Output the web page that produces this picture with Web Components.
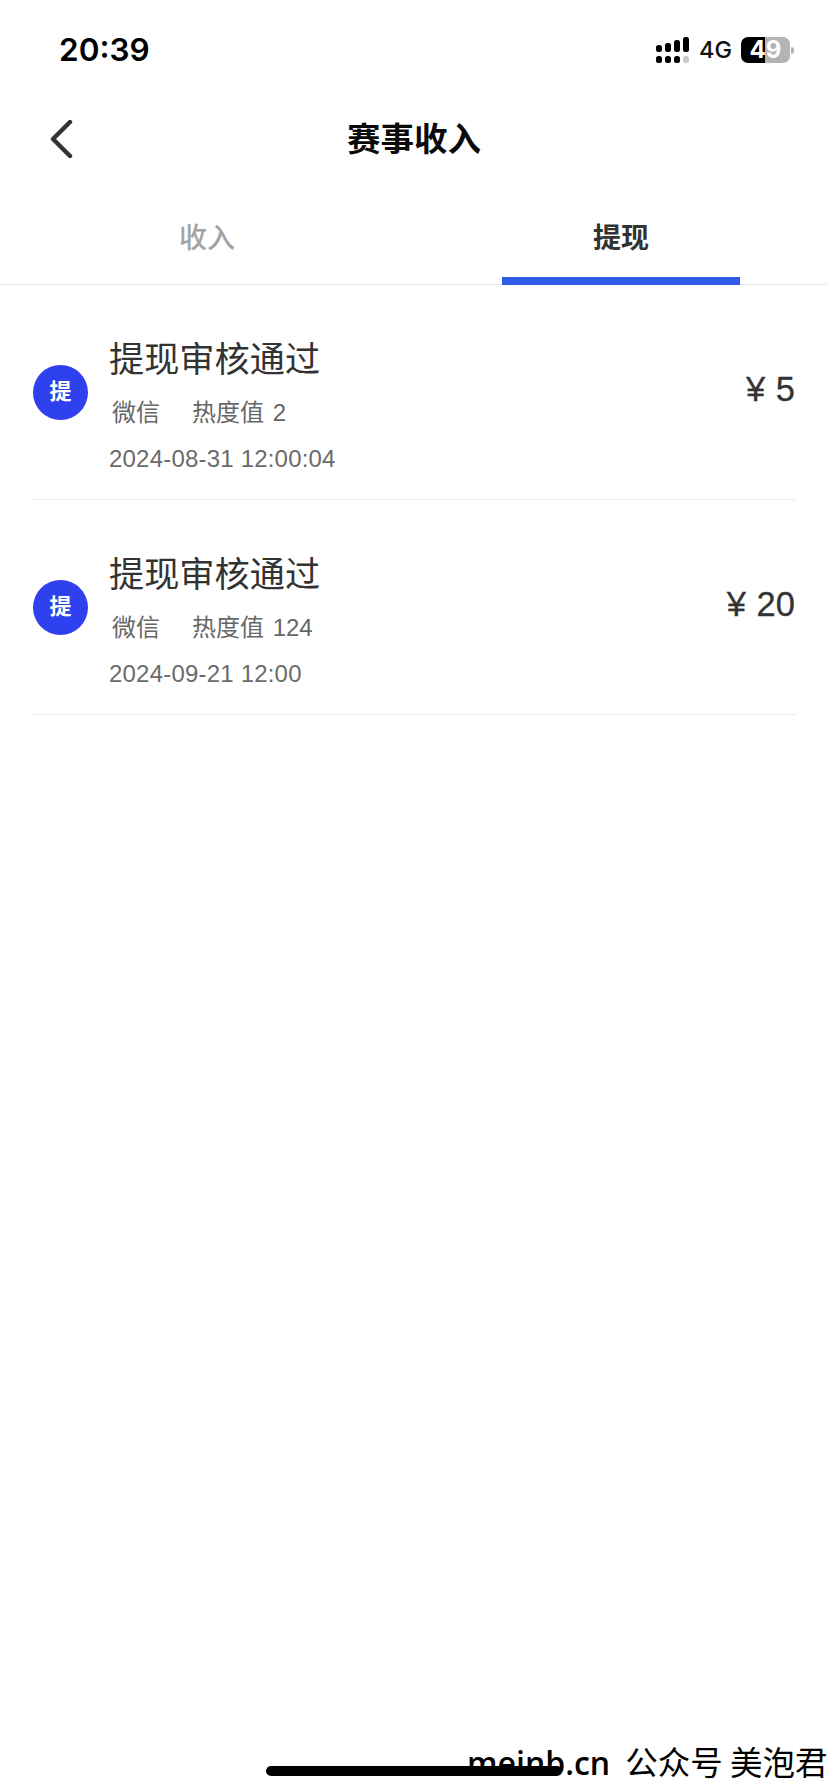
<!DOCTYPE html>
<html lang="zh">
<head>
<meta charset="utf-8">
<title>赛事收入</title>
<style>
  html, body { margin: 0; padding: 0; background: #fff; }
  body {
    position: relative;
    width: 828px;
    height: 1792px;
    overflow: hidden;
    font-family: "Inter", "Noto Sans CJK SC", sans-serif;
  }
</style>
</head>
<body>
<status-bar time="20:39" network="4G" battery="49"></status-bar>
<nav-header>赛事收入</nav-header>
<tab-bar>
  <tab-item>收入</tab-item>
  <tab-item active>提现</tab-item>
</tab-bar>
<record-list>
  <record-row amount="¥ 5">
    <span slot="title">提现审核通过</span>
    <span slot="channel">微信</span>
    <span slot="heat">热度值 2</span>
    <span slot="date">2024-08-31 12:00:04</span>
  </record-row>
  <record-row amount="¥ 20">
    <span slot="title">提现审核通过</span>
    <span slot="channel">微信</span>
    <span slot="heat">热度值 124</span>
    <span slot="date">2024-09-21 12:00</span>
  </record-row>
</record-list>
<water-mark></water-mark>
<home-bar></home-bar>

<script>
const statusTpl = document.createElement('template');
statusTpl.innerHTML = `
  <style>
    :host { display: flex; justify-content: space-between; align-items: flex-start; height: 98px; box-sizing: border-box; padding: 30px 34px 0 59px; }
    .time { font: 600 31.5px/40px "Inter", sans-serif; color: #000; }
    .right { display: flex; align-items: center; height: 30px; margin-top: 5px; }
    svg { display: block; }
    .net { font: 500 23.5px/30px "Inter", sans-serif; color: #111; margin-left: 10px; width: 42px; }
    .batt { width: 49px; height: 26px; border-radius: 7px; background: linear-gradient(90deg, #000 49%, #b4b4b4 49%); text-align: center; font: 700 24px/26px "Inter", sans-serif; color: #fff; }
    .nub { width: 3px; height: 7px; margin-left: 1px; background: #b4b4b4; border-radius: 0 3px 3px 0; }
  </style>
  <div class="time"></div>
  <div class="right">
    <svg width="33" height="26" viewBox="0 0 33 26">
      <rect x="0" y="8" width="6" height="7" rx="2.5"/>
      <rect x="9" y="6" width="6" height="9" rx="2.5"/>
      <rect x="18" y="3" width="6" height="12" rx="2.5"/>
      <rect x="27" y="0" width="6" height="15" rx="2.5"/>
      <rect x="0" y="19" width="6" height="7" rx="2.5"/>
      <rect x="9" y="19" width="6" height="7" rx="2.5"/>
      <rect x="18" y="19" width="6" height="7" rx="2.5"/>
      <rect x="27" y="19" width="6" height="7" rx="2.5" fill="#c8c8c8"/>
    </svg>
    <div class="net"></div>
    <div class="batt"></div>
    <div class="nub"></div>
  </div>`;

class StatusBar extends HTMLElement {
  constructor() {
    super();
    this.attachShadow({ mode: 'open' }).appendChild(statusTpl.content.cloneNode(true));
  }
  connectedCallback() {
    this.shadowRoot.querySelector('.time').textContent = this.getAttribute('time');
    this.shadowRoot.querySelector('.net').textContent = this.getAttribute('network');
    this.shadowRoot.querySelector('.batt').textContent = this.getAttribute('battery');
  }
}

const navTpl = document.createElement('template');
navTpl.innerHTML = `
  <style>
    :host { display: flex; align-items: center; justify-content: center; position: relative; height: 84px; }
    svg { position: absolute; left: 49px; top: 21px; }
    .title { font: 700 33.5px/44px "Liberation Sans", "Noto Sans CJK SC", sans-serif; color: #0a0a0a; }
  </style>
  <svg width="24" height="40" viewBox="0 0 24 40" fill="none" stroke="#333" stroke-width="4.4" stroke-linecap="round" stroke-linejoin="round">
    <path d="M21 3 L4 20 L21 37"/>
  </svg>
  <div class="title"><slot></slot></div>`;

class NavHeader extends HTMLElement {
  constructor() {
    super();
    this.attachShadow({ mode: 'open' }).appendChild(navTpl.content.cloneNode(true));
  }
}

const tabsTpl = document.createElement('template');
tabsTpl.innerHTML = `
  <style>
    :host { display: grid; grid-template-columns: 1fr 1fr; height: 102px; border-bottom: 1px solid #e9e9e9; }
  </style>
  <slot></slot>`;

class TabBar extends HTMLElement {
  constructor() {
    super();
    this.attachShadow({ mode: 'open' }).appendChild(tabsTpl.content.cloneNode(true));
  }
}

const tabTpl = document.createElement('template');
tabTpl.innerHTML = `
  <style>
    :host { display: flex; flex-direction: column; align-items: center; justify-content: flex-end; font: 500 28px/40px "Noto Sans CJK SC", sans-serif; color: #a3a3a3; }
    :host([active]) { color: #333; font-weight: 700; }
    .label { margin-bottom: 21px; }
    .line { width: 238px; height: 8px; margin-bottom: -1px; background: transparent; }
    :host([active]) .line { background: #2f5bea; }
  </style>
  <div class="label"><slot></slot></div>
  <div class="line"></div>`;

class TabItem extends HTMLElement {
  constructor() {
    super();
    this.attachShadow({ mode: 'open' }).appendChild(tabTpl.content.cloneNode(true));
  }
}

const listTpl = document.createElement('template');
listTpl.innerHTML = `
  <style>:host { display: flex; flex-direction: column; padding: 0 32px 0 33px; }</style>
  <slot></slot>`;

class RecordList extends HTMLElement {
  constructor() {
    super();
    this.attachShadow({ mode: 'open' }).appendChild(listTpl.content.cloneNode(true));
  }
}

const rowTpl = document.createElement('template');
rowTpl.innerHTML = `
  <style>
    :host { display: flex; align-items: center; height: 215px; box-sizing: border-box; border-bottom: 1px solid #ececec; color: #333; }
    .badge { flex: none; width: 55px; height: 55px; border-radius: 50%; background: #2f40ee; color: #fff; display: flex; align-items: center; justify-content: center; font: 700 22px/1 "Noto Sans CJK SC", sans-serif; margin-right: 21px; padding-bottom: 6px; box-sizing: border-box; }
    .body { flex: 1; align-self: flex-start; display: flex; flex-direction: column; margin-top: 49px; }
    .title { font: 400 35.2px/46px "Noto Sans CJK SC", sans-serif; color: #333; }
    .meta { display: flex; margin-top: 15px; font: 400 24px/36px "Liberation Sans", "Noto Sans CJK SC", sans-serif; color: #666; word-spacing: 2px; }
    .channel { margin-left: 3px; width: 80px; }
    .date { margin-top: 12px; font: 400 24px/32px "Liberation Sans", sans-serif; color: #6b6b6b; letter-spacing: 0.2px; }
    .amount { font: 400 34.5px/44px "Liberation Sans", sans-serif; color: #333; margin: -6px 1px 0 0; -webkit-text-stroke: 0.3px #333; word-spacing: 1px; }
  </style>
  <div class="badge">提</div>
  <div class="body">
    <div class="title"><slot name="title"></slot></div>
    <div class="meta">
      <div class="channel"><slot name="channel"></slot></div>
      <div><slot name="heat"></slot></div>
    </div>
    <div class="date"><slot name="date"></slot></div>
  </div>
  <div class="amount"></div>`;

class RecordRow extends HTMLElement {
  constructor() {
    super();
    this.attachShadow({ mode: 'open' }).appendChild(rowTpl.content.cloneNode(true));
  }
  connectedCallback() {
    this.shadowRoot.querySelector('.amount').textContent = this.getAttribute('amount');
  }
}

class WaterMark extends HTMLElement {
  constructor() {
    super();
    this.attachShadow({ mode: 'open' }).innerHTML = `
      <style>
        :host { position: absolute; left: 467px; top: 1739px; white-space: nowrap; color: #000; font: 600 32px/44px "Open Sans", "Noto Sans CJK SC", sans-serif; }
        .cn { margin-left: 15px; font: 400 32.5px/44px "Noto Sans CJK SC", sans-serif; }
      </style>
      <span>meinb.cn</span><span class="cn">公众号 美泡君</span>`;
  }
}

class HomeBar extends HTMLElement {
  constructor() {
    super();
    this.attachShadow({ mode: 'open' }).innerHTML = `
      <style>
        :host { position: absolute; left: 266px; top: 1766px; width: 296px; height: 10px; border-radius: 5px; background: #000; }
      </style>`;
  }
}

customElements.define('status-bar', StatusBar);
customElements.define('nav-header', NavHeader);
customElements.define('tab-bar', TabBar);
customElements.define('tab-item', TabItem);
customElements.define('record-list', RecordList);
customElements.define('record-row', RecordRow);
customElements.define('water-mark', WaterMark);
customElements.define('home-bar', HomeBar);
</script>
</body>
</html>
